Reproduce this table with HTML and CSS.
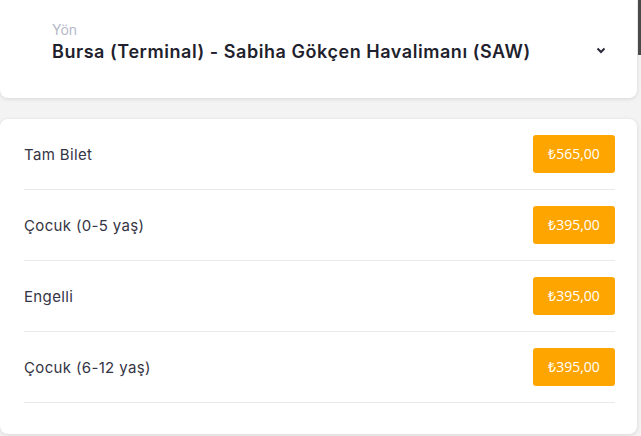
FILE: index.html
```html
<!DOCTYPE html>
<html lang="tr">
<head>
<meta charset="utf-8">
<link rel="stylesheet" href="styles.css">
</head>
<body>
<div class="page">
  <div class="card select-card">
    <div class="select-text">
      <div class="select-label">Yön</div>
      <div class="select-value">Bursa (Terminal) - Sabiha Gökçen Havalimanı (SAW)</div>
    </div>
    <svg class="chevron" width="10" height="7" viewBox="0 0 10 7"><path d="M1.5 1.5 L5 5 L8.5 1.5" fill="none" stroke="#2a2a3a" stroke-width="2"/></svg>
  </div>
  <div class="card price-card">
    <div class="row"><span class="row-name">Tam Bilet</span><span class="badge">₺565,00</span></div>
    <div class="row"><span class="row-name">Çocuk (0-5 yaş)</span><span class="badge">₺395,00</span></div>
    <div class="row"><span class="row-name">Engelli</span><span class="badge">₺395,00</span></div>
    <div class="row"><span class="row-name">Çocuk (6-12 yaş)</span><span class="badge">₺395,00</span></div>
  </div>
</div>
<div class="scrollbar"></div>
</body>
</html>
```
FILE: styles.css
```css
html, body { margin: 0; padding: 0; }
body {
  background: #f3f3f3;
  font-family: "Inter", "Noto Sans", sans-serif;
  width: 641px;
  height: 436px;
  overflow: hidden;
  position: relative;
}
.page {
  padding-right: 4px;
  display: flex;
  flex-direction: column;
  gap: 21px;
}
.card {
  background: #fff;
  border-radius: 8px;
  box-shadow: 0 1px 4px rgba(0,0,0,0.12);
}
.select-card {
  height: 98px;
  box-sizing: border-box;
  display: flex;
  align-items: center;
  padding: 0 31px 0 52px;
  border-radius: 0 0 8px 8px;
}
.select-text { flex: 1; display: flex; flex-direction: column; margin-top: -14px; }
.select-label {
  font-size: 14px;
  color: #b6b8c8;
  line-height: 18px;
  font-weight: 400;
}
.select-value {
  font-size: 18px;
  font-weight: 600;
  color: #1f1f2e;
  line-height: 24px;
  margin-top: 1px;
  letter-spacing: 0.55px;
}
.chevron { margin-top: 2px; }
.price-card {
  padding: 0 22px 31px 24px;
}
.row {
  height: 70px;
  border-bottom: 1px solid #e9e9ee;
  display: flex;
  align-items: center;
  justify-content: space-between;
}
.row-name {
  font-size: 15px;
  color: #343444;
  letter-spacing: 0.35px;
}
.badge {
  background: #ffa500;
  color: #fff;
  font-family: "Open Sans", sans-serif;
  font-size: 14px;
  height: 38px;
  width: 82px;
  border-radius: 3px;
  display: flex;
  align-items: center;
  justify-content: center;
  margin-top: -1px;
}
.scrollbar {
  position: absolute;
  right: 0;
  top: 0;
  width: 3px;
  height: 55px;
  background: #4a4a4a;
}
```
